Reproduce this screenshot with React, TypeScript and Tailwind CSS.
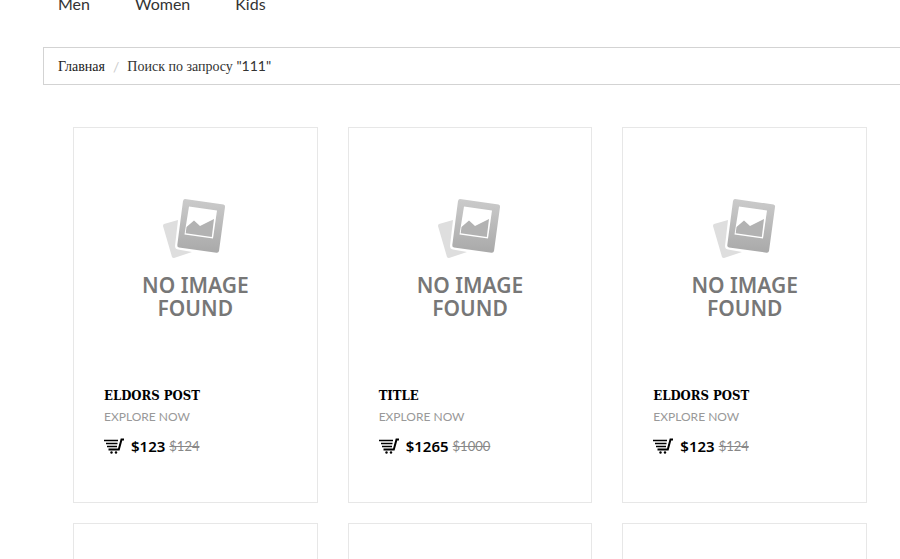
type Product = { title: string; price: string; oldPrice: string };

const products: Product[] = [
  { title: "ELDORS POST", price: "$123", oldPrice: "$124" },
  { title: "TITLE", price: "$1265", oldPrice: "$1000" },
  { title: "ELDORS POST", price: "$123", oldPrice: "$124" },
];

const menu = ["Men", "Women", "Kids"];

function PhotosIcon() {
  return (
    <svg width="64" height="60" viewBox="0 0 64 60" aria-hidden="true">
      <defs>
        <linearGradient id="frame" x1="0" y1="0" x2="0" y2="1">
          <stop offset="0" stopColor="#cbcbcb" />
          <stop offset="1" stopColor="#a9a9a9" />
        </linearGradient>
      </defs>
      <path d="M1 25 L15 21 L12 47 Q12 50 15 50.5 L29 53 L11 59 Q9.500 59 9 58 L0 27 Q0 25.500 1 25Z" fill="#dedede" />
      <path d="M22 0 L60.500 5.500 Q62.500 6 62 8 L56 52 Q55.500 54 53.500 53.700 L16 48.500 Q14 48 14.300 46 L20 2 Q20.500 0 22 0Z" fill="url(#frame)" />
      <path d="M26 7.500 L54 11.500 L50 39.500 L21.500 35.500Z" fill="#fff" />
      <path d="M23.500 28 L31 21.500 L37 27 L51 20 L48.800 38 L22.700 34.300Z" fill="#b2b2b2" />
    </svg>
  );
}

function CartIcon() {
  return (
    <svg width="20" height="16" viewBox="0 0 20 16" fill="none" stroke="#000" aria-hidden="true">
      <path d="M0 2.500H14M2 5.500H13.500M3 8.500H13" strokeWidth="1.7" />
      <path d="M4.500 11.500H14.800L17.500 1.500H20" strokeWidth="2" />
      <circle cx="7.500" cy="14.500" r="1.2" fill="#000" stroke="none" />
      <circle cx="12" cy="14.500" r="1.2" fill="#000" stroke="none" />
    </svg>
  );
}

function ProductCard({ title, price, oldPrice }: Product) {
  return (
    <article className="h-[376px] border border-[#e7e7e7] px-[30px]">
      <div className="flex h-[256px] flex-col items-center pt-[71px]">
        <PhotosIcon />
        <div className="mt-[15px] text-center font-['Noto_Sans',sans-serif] text-[21px] leading-[23px] font-semibold text-[#777]">
          <p>NO IMAGE</p>
          <p>FOUND</p>
        </div>
      </div>
      <h3 className="font-['DejaVu_Serif_Condensed','DejaVu_Serif',serif] text-[13px] leading-6 font-bold text-black">
        <a href="#">{title}</a>
      </h3>
      <p className="text-[12px] leading-[18px] text-[#999]">EXPLORE NOW</p>
      <p className="mt-[10px] flex items-center leading-5">
        <a href="#" aria-label="Add to cart">
          <CartIcon />
        </a>
        <strong className="ml-[7px] font-['Noto_Sans',sans-serif] text-[15px] font-semibold text-black">{price}</strong>
        <del className="ml-1 text-[13px] text-[#888]">{oldPrice}</del>
      </p>
    </article>
  );
}

export default function App() {
  return (
    <div className="h-screen overflow-hidden bg-white font-[Lato,sans-serif]">
      <nav className="-mt-2 flex gap-[45px] pl-[58px] text-[16px] leading-6 text-[#333]">
        {menu.map((item) => (
          <a key={item} href="#">
            {item}
          </a>
        ))}
      </nav>
      <nav
        aria-label="Breadcrumb"
        className="mt-[31px] ml-[43px] flex h-[38px] items-center border border-r-0 border-[#d3d3d3] pl-[14px] font-['Liberation_Serif',serif] text-[14px] text-[#333]"
      >
        <a href="#" className="text-[#222]">
          Главная
        </a>
        <span className="px-2 font-[Lato,sans-serif] text-[#ccc]">/</span>
        <span>
          Поиск по запросу <span className="font-[Lato,sans-serif]">"111"</span>
        </span>
      </nav>
      <main className="mt-[42px] mr-[33px] ml-[73px] grid grid-cols-3 gap-x-[30px] gap-y-5">
        {products.map((product, i) => (
          <ProductCard key={i} {...product} />
        ))}
        {products.map((_, i) => (
          <article key={i} className="h-[376px] border border-[#e7e7e7]" />
        ))}
      </main>
    </div>
  );
}
